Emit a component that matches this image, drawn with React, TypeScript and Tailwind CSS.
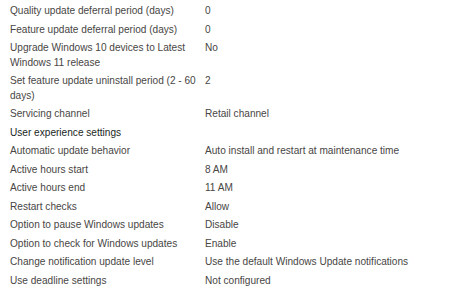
import React from "react";

const rows: [string, string, boolean?][] = [
  ["Quality update deferral period (days)", "0"],
  ["Feature update deferral period (days)", "0"],
  ["Upgrade Windows 10 devices to Latest Windows 11 release", "No"],
  ["Set feature update uninstall period (2 - 60 days)", "2"],
  ["Servicing channel", "Retail channel"],
  ["User experience settings", "", true],
  ["Automatic update behavior", "Auto install and restart at maintenance time"],
  ["Active hours start", "8 AM"],
  ["Active hours end", "11 AM"],
  ["Restart checks", "Allow"],
  ["Option to pause Windows updates", "Disable"],
  ["Option to check for Windows updates", "Enable"],
  ["Change notification update level", "Use the default Windows Update notifications"],
  ["Use deadline settings", "Not configured"],
];

export default function App() {
  return (
    <div
      className="w-[449px] h-[289px] bg-white pl-[10px] pt-[2px] overflow-hidden text-[10.1px] leading-[14.5px] text-[#484644]"
      style={{ fontFamily: '"Liberation Sans", Arial, sans-serif' }}
    >
      {rows.map(([label, value, header], i) => (
        <div key={i} className="flex py-[2px]">
          <div className={`w-[195px] shrink-0 pr-[6px] ${header ? "text-[#201f1e]" : ""}`}>{label}</div>
          <div className="flex-1">{value}</div>
        </div>
      ))}
    </div>
  );
}
